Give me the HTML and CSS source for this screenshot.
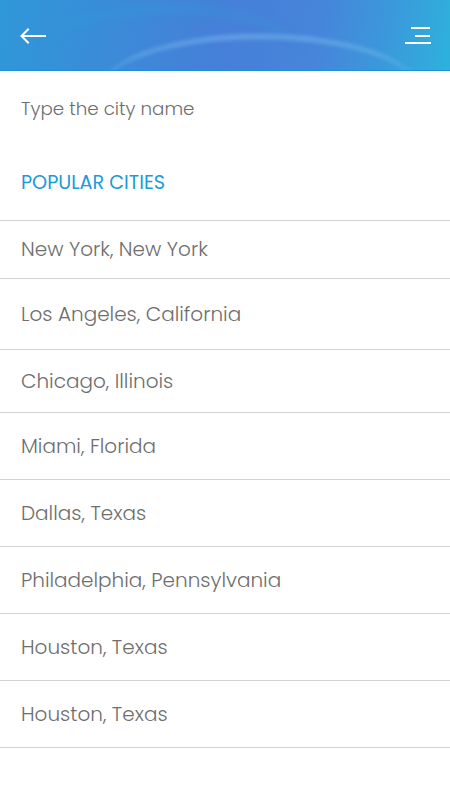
FILE: index.html
```html
<!DOCTYPE html>
<html lang="en">
<head>
<meta charset="utf-8">
<title>Choose city</title>
<link rel="stylesheet" href="styles.css">
</head>
<body>
<header class="topbar">
  <button class="icon-btn back" aria-label="Back">
    <svg width="26" height="16" viewBox="0 0 26 16" fill="none" stroke="#fff" stroke-width="2" stroke-linecap="square">
      <path d="M25 8H2"/>
      <path d="M8 1.5L1.5 8L8 14.5"/>
    </svg>
  </button>
  <button class="icon-btn menu" aria-label="Menu">
    <svg width="28" height="18" viewBox="0 0 28 18" fill="none" stroke="#fff" stroke-width="2">
      <path d="M7 1H26"/>
      <path d="M11 9H26"/>
      <path d="M1 16H27"/>
    </svg>
  </button>
</header>
<main>
  <div class="search">Type the city name</div>
  <h2 class="section-title">POPULAR CITIES</h2>
  <ul class="city-list">
    <li class="city h58">New York, New York</li>
    <li class="city h71">Los Angeles, California</li>
    <li class="city h63">Chicago, Illinois</li>
    <li class="city">Miami, Florida</li>
    <li class="city">Dallas, Texas</li>
    <li class="city">Philadelphia, Pennsylvania</li>
    <li class="city">Houston, Texas</li>
    <li class="city">Houston, Texas</li>
  </ul>
</main>
</body>
</html>
```
FILE: styles.css
```css
* { box-sizing: border-box; }
html, body { margin: 0; padding: 0; }
body {
  width: 450px;
  height: 800px;
  background: #fff;
  font-family: "Poppins", "Open Sans", sans-serif;
  font-weight: 300;
  color: #727272;
  overflow: hidden;
}
.topbar {
  position: relative;
  height: 71px;
  display: flex;
  align-items: center;
  justify-content: space-between;
  padding: 0 18px 0 20px;
  background: linear-gradient(100deg, #2f98d8 0%, #3b8bd8 25%, #467fd9 50%, #4685da 70%, #3b98db 85%, #2db2dc 100%);
  border-bottom: 1px solid #1f8fdc;
  overflow: hidden;
}
.topbar::before {
  content: "";
  position: absolute;
  left: 100px;
  top: 34px;
  width: 320px;
  height: 110px;
  border-radius: 50%;
  border-top: 5px solid rgba(150, 210, 250, 0.4);
  filter: blur(2px);
}
.topbar::after {
  content: "";
  position: absolute;
  left: 40px;
  top: 6px;
  width: 260px;
  height: 90px;
  border-radius: 50%;
  border-top: 6px solid rgba(40, 170, 215, 0.35);
  filter: blur(4px);
}
.icon-btn {
  position: relative;
  z-index: 1;
  background: none;
  border: 0;
  padding: 0;
  display: flex;
}
.back { margin-top: 1px; }
.menu { margin-top: 1px; }
main { display: flex; flex-direction: column; }
.search {
  height: 74px;
  padding: 24px 21px 0;
  font-size: 18.3px;
  color: #6e6e6e;
}
.section-title {
  margin: 0;
  height: 75px;
  padding: 23px 21px 0;
  font-size: 19.2px;
  font-weight: 400;
  color: #1b9bd7;
}
.city-list {
  list-style: none;
  margin: 0;
  padding: 0;
  border-top: 1px solid #d2d2d2;
}
.city {
  height: 67px;
  display: flex;
  align-items: center;
  padding: 0 21px 1px;
  font-size: 20px;
  color: #6e6e6e;
  border-bottom: 1px solid #d2d2d2;
}
.city.h58 { height: 58px; }
.city.h71 { height: 71px; }
.city.h63 { height: 63px; }
```
